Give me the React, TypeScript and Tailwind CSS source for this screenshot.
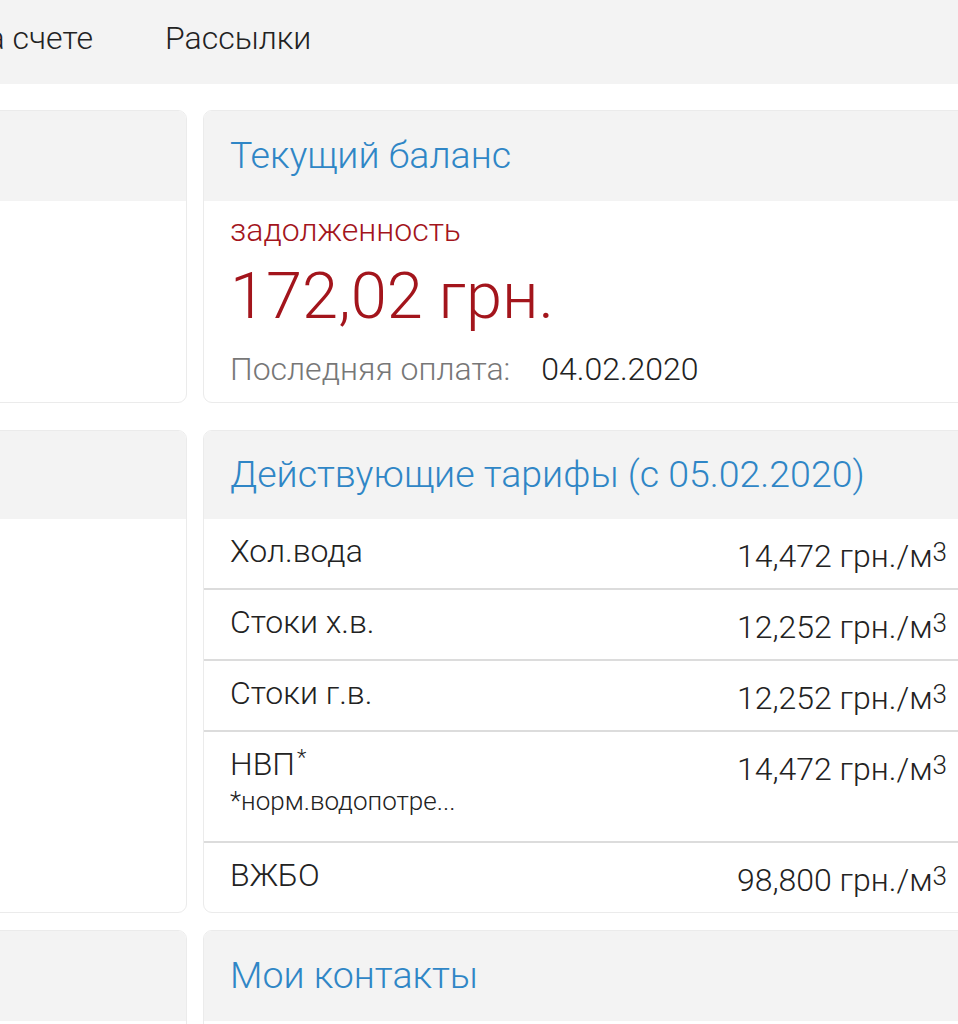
import React from 'react';

// Tariff rows shown in the "Действующие тарифы" card
const TARIFFS = [
  { name: 'Хол.вода', price: '14,472' },
  { name: 'Стоки х.в.', price: '12,252' },
  { name: 'Стоки г.в.', price: '12,252' },
  { name: 'НВП', price: '14,472', star: true, note: '*норм.водопотре...' },
  { name: 'ВЖБО', price: '98,800' },
];

function Card({
  title,
  headerH,
  children,
  className = '',
}: {
  title?: string;
  headerH: string;
  children?: React.ReactNode;
  className?: string;
}) {
  return (
    <div className={`overflow-hidden rounded-[9px] border border-[#ebebeb] bg-white ${className}`}>
      <div className={`flex items-center bg-[#f3f3f3] px-[26px] ${headerH}`}>
        {title && <h2 className="text-[37.5px] font-light leading-none text-[#2f86c6]">{title}</h2>}
      </div>
      {children}
    </div>
  );
}

function Price({ value }: { value: string }) {
  return (
    <span className="whitespace-nowrap text-[32px] font-light leading-[36px] text-[#222]">
      {value} грн./м<sup className="relative -top-[6px] text-[26px]">3</sup>
    </span>
  );
}

export default function App() {
  return (
    <div className="min-h-screen w-[958px] overflow-hidden bg-white font-['Roboto','Noto_Sans',sans-serif] text-[#222]">
      {/* Top tabs, first one is clipped by the viewport */}
      <nav className="flex h-[84px] items-center bg-[#f3f3f3] pb-[8px] text-[32px] font-light text-[#222]">
        <div className="flex w-[93px] shrink-0 justify-end whitespace-nowrap">Средства на счете</div>
        <div className="ml-[72px] whitespace-nowrap">Рассылки</div>
      </nav>

      <div className="-ml-[584px] w-[1560px] pt-[26px]">
        {/* Row 1 */}
        <div className="grid grid-cols-[771px_771px] gap-x-4">
          <Card headerH="h-[90px]" className="h-[293px]" />
          <Card title="Текущий баланс" headerH="h-[90px]" className="h-[293px]">
            <div className="px-[26px] pt-[11px]">
              <div className="text-[32px] font-light leading-[36px] text-[#a3151c]">задолженность</div>
              <div className="mt-[13px] text-[65px] font-light leading-[70px] text-[#a3151c]">172,02 грн.</div>
              <div className="mt-[20px] flex items-baseline text-[32px] font-light leading-[36px]">
                <span className="text-[#777]">Последняя оплата:</span>
                <span className="ml-[31px] text-[#222]">04.02.2020</span>
              </div>
            </div>
          </Card>
        </div>

        {/* Row 2 */}
        <div className="mt-[27px] grid grid-cols-[771px_771px] gap-x-4">
          <Card headerH="h-[88px]" className="h-[483px]" />
          <Card title="Действующие тарифы (с 05.02.2020)" headerH="h-[88px]" className="h-[483px]">
            {TARIFFS.map((t, i) => (
              <div
                key={t.name}
                className={`flex items-start justify-between px-[26px] pt-[14px] ${
                  i < TARIFFS.length - 1 ? 'border-b-2 border-[#dcdcdc]' : ''
                } ${t.note ? 'h-[111px]' : 'h-[71px]'}`}
              >
                <div className="font-light">
                  <div className="text-[32px] leading-[36px]">
                    {t.name}
                    {t.star && <sup className="relative -top-[10px] ml-[2px] text-[22px]">*</sup>}
                  </div>
                  {t.note && <div className="mt-[4px] text-[26px] leading-[30px]">{t.note}</div>}
                </div>
                <div className="pt-[5px]">
                  <Price value={t.price} />
                </div>
              </div>
            ))}
          </Card>
        </div>

        {/* Row 3 */}
        <div className="mt-[17px] grid grid-cols-[771px_771px] gap-x-4">
          <Card headerH="h-[90px]" className="h-[200px]" />
          <Card title="Мои контакты" headerH="h-[90px]" className="h-[200px]" />
        </div>
      </div>
    </div>
  );
}
